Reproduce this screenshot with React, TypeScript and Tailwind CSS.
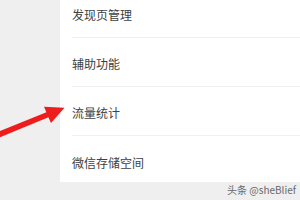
const ROWS = ["发现页管理", "辅助功能", "流量统计", "微信存储空间"];

export default function App() {
  return (
    <div
      className="relative w-[300px] h-[200px] overflow-hidden bg-[#efefef]"
      style={{ fontFamily: '"Noto Sans CJK SC", "Liberation Sans", sans-serif' }}
    >
      <div className="ml-[60px] h-[182px] bg-white overflow-hidden">
        <div className="mt-[-11px] pl-[12px]">
          {ROWS.map((r, i) => (
            <div
              key={r}
              className={`h-[49px] pt-[4px] flex items-center text-[12px] text-[#404040] ${
                i < ROWS.length - 1 ? "border-b border-[#f0f0f0]" : ""
              }`}
            >
              {r}
            </div>
          ))}
        </div>
      </div>

      <div className="absolute right-[4px] bottom-[5px] text-[10px] leading-none text-[#6a6a6a]">
        头条 @sheBlief
      </div>

      <svg className="absolute left-0 top-0" width="300" height="200" viewBox="0 0 300 200">
        <polygon
          points="-3,132.3 46.4,112.3 44,106.8 64.5,107.8 51,123 48.4,117.3 -1,137.6"
          fill="#ee1c1c"
        />
      </svg>
    </div>
  );
}
